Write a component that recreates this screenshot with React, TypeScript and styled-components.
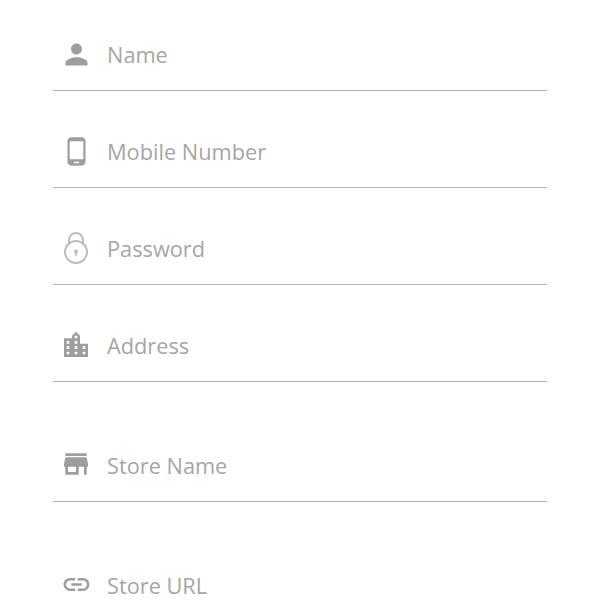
import * as React from 'react'
import styled, {createGlobalStyle} from 'styled-components'
import {MdLink, MdLocationCity, MdPerson, MdPhoneAndroid, MdStore} from 'react-icons/md'

const GlobalStyle = createGlobalStyle`
  html, body {
    margin: 0;
    padding: 0;
    height: 600px;
    overflow: hidden;
    background: #fff;
    font-family: "Open Sans", sans-serif;
  }
`;

const Form = styled.form`
  display: flex;
  flex-direction: column;
  height: 600px;
  overflow: hidden;
  box-sizing: border-box;
  padding: 20px 53px 0;
`;

// wide rows have the extra space above them
const Field = styled.label<{$wide?: boolean}>`
  flex: none;
  display: flex;
  align-items: center;
  height: 70px;
  margin-top: ${props => props.$wide ? 49 : 26}px;
  border-bottom: 1px solid #b4b4b4;
  &:first-child {
    margin-top: 0;
  }
`;

// $lift raises the glyph off the row's centre line
const IconSlot = styled.span<{$tone?: string, $lift?: number}>`
  flex: none;
  display: flex;
  align-items: center;
  justify-content: center;
  width: 46px;
  margin-right: 8px;
  padding-bottom: ${props => props.$lift || 0}px;
  color: ${props => props.$tone || '#9e9e9e'};
`;

const Input = styled.input`
  flex: 1;
  min-width: 0;
  border: 0;
  outline: 0;
  padding: 0 0 2px;
  background: transparent;
  font-family: inherit;
  font-size: 21.75px;
  color: #444;
  &::placeholder {
    color: #a6a6a6;
    opacity: 1;
  }
`;

const LockIcon = () => (
    <svg width="26" height="32" viewBox="0 0 26 32" fill="none" stroke="currentColor" strokeWidth="2">
        <path d="M6 13V8a7 7 0 0 1 14 0V13" />
        <circle cx="13" cy="20" r="11" />
        <circle cx="13" cy="19.5" r="2" fill="currentColor" stroke="none" />
        <path d="M13 20v4" strokeWidth="1.6" />
    </svg>
);

export default function App() {
    return <>
        <GlobalStyle />
        <Form>
            <Field>
                <IconSlot $lift={2}><MdPerson size={33} /></IconSlot>
                <Input placeholder="Name" />
            </Field>
            <Field>
                <IconSlot $lift={2}><MdPhoneAndroid size={31} /></IconSlot>
                <Input placeholder="Mobile Number" />
            </Field>
            <Field>
                <IconSlot $tone="#bdbdbd" $lift={2}><LockIcon /></IconSlot>
                <Input placeholder="Password" type="password" />
            </Field>
            <Field>
                <IconSlot $lift={3}><MdLocationCity size={32} /></IconSlot>
                <Input placeholder="Address" />
            </Field>
            <Field $wide>
                <IconSlot $lift={4}><MdStore size={32} /></IconSlot>
                <Input placeholder="Store Name" />
            </Field>
            <Field $wide>
                <IconSlot $lift={3}><MdLink size={31} /></IconSlot>
                <Input placeholder="Store URL" />
            </Field>
        </Form>
    </>;
}
